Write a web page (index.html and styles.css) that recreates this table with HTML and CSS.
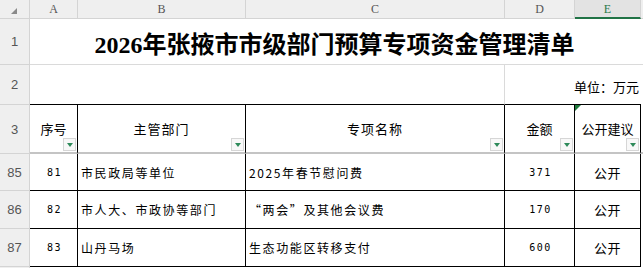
FILE: index.html
```html
<!DOCTYPE html>
<html lang="zh-CN">
<head>
<meta charset="utf-8">
<title>2026年张掖市市级部门预算专项资金管理清单</title>
<link rel="stylesheet" href="styles.css">
</head>
<body>
<div class="sheet">
  <!-- column headers -->
  <div class="corner"><span class="corner-tri"></span></div>
  <div class="colhead">A</div>
  <div class="colhead">B</div>
  <div class="colhead">C</div>
  <div class="colhead">D</div>
  <div class="colhead sel">E</div>
  <div class="colhead last"></div>

  <!-- row 1 -->
  <div class="rowhead">1</div>
  <div class="title">2026年张掖市市级部门预算专项资金管理清单</div>

  <!-- row 2 -->
  <div class="rowhead">2</div>
  <div class="r2 r2a"></div>
  <div class="r2 r2b">单位：万元</div>
  <div class="r2 fcol"></div>

  <!-- row 3 -->
  <div class="rowhead">3</div>
  <div class="hcell">序号<span class="filter"></span></div>
  <div class="hcell sp">主管部门<span class="filter"></span></div>
  <div class="hcell sp">专项名称<span class="filter"></span></div>
  <div class="hcell">金额<span class="filter"></span></div>
  <div class="hcell"><span class="flag"></span>公开建议<span class="filter"></span></div>
  <div class="hfcol"></div>

  <!-- row 85 -->
  <div class="rowhead">85</div>
  <div class="cell num">81</div>
  <div class="cell txt">市民政局等单位</div>
  <div class="cell txt">2025年春节慰问费</div>
  <div class="cell num">371</div>
  <div class="cell ctr">公开</div>
  <div class="dfcol"></div>

  <!-- row 86 -->
  <div class="rowhead">86</div>
  <div class="cell num">82</div>
  <div class="cell txt">市人大、市政协等部门</div>
  <div class="cell txt">“两会”及其他会议费</div>
  <div class="cell num">170</div>
  <div class="cell ctr">公开</div>
  <div class="dfcol"></div>

  <!-- row 87 -->
  <div class="rowhead">87</div>
  <div class="cell num">83</div>
  <div class="cell txt">山丹马场</div>
  <div class="cell txt">生态功能区转移支付</div>
  <div class="cell num">600</div>
  <div class="cell ctr">公开</div>
  <div class="dfcol"></div>

  <div class="rowhead tail"></div>
  <div class="tailrow"></div>
</div>
</body>
</html>
```

FILE: styles.css
```css
* { box-sizing: border-box; }
html, body { margin: 0; padding: 0; background: #ffffff; overflow: hidden; }
body { width: 643px; height: 268px; }

.sheet {
  display: grid;
  grid-template-columns: 30px 48px 168px 259px 70px 66px 2px;
  grid-template-rows: 19px 46px 40px 49px 37px 38px 38px 1px;
  font-family: "Noto Sans CJK SC", "Noto Sans", sans-serif;
  color: #000;
}

.corner {
  background: #efefef;
  border-right: 1px solid #d4d4d4;
  border-bottom: 1px solid #d4d4d4;
  position: relative;
}
.corner-tri {
  position: absolute;
  left: 11px;
  top: 8px;
  width: 0; height: 0;
  border-left: 6px solid transparent;
  border-bottom: 6px solid #8a8a8a;
}

.colhead {
  background: #efefef;
  border-right: 1px solid #d4d4d4;
  border-bottom: 1px solid #d4d4d4;
  font-family: "Liberation Serif", serif;
  font-size: 12px;
  color: #555;
  display: flex;
  align-items: center;
  justify-content: center;
  padding-top: 1px;
}
.colhead.sel {
  background: #e3e3e3;
  color: #2b7a4b;
  border-bottom: 2px solid #217346;
}
.colhead.last { border-right: none; }

.rowhead {
  background: #efefef;
  border-right: 1px solid #d4d4d4;
  border-bottom: 1px solid #d4d4d4;
  font-family: "Liberation Sans", sans-serif;
  font-size: 13px;
  color: #555;
  display: flex;
  align-items: center;
  justify-content: center;
}
.rowhead.tail { border-bottom: none; }

.title {
  grid-column: 2 / 8;
  border-bottom: 1px solid #dadada;
  display: flex;
  align-items: center;
  justify-content: center;
  font-family: "Liberation Serif", "Noto Sans CJK SC", serif;
  font-weight: 700;
  font-size: 24px;
  padding-top: 1px;
  padding-right: 4px;
}

.r2 { border-bottom: 1px solid #000; }
.r2a { grid-column: 2 / 5; border-right: 1px solid #dadada; }
.r2b {
  grid-column: 5 / 7;
  display: flex;
  align-items: flex-end;
  justify-content: flex-end;
  font-size: 13px;
  padding: 0 2px 8px 0;
  white-space: nowrap;
}
.r2.fcol { border-bottom: none; }

.hcell {
  position: relative;
  border-right: 1px solid #000;
  border-bottom: 2px solid #c4c4c4;
  display: flex;
  align-items: center;
  justify-content: center;
  font-size: 13px;
  padding-bottom: 1px;
}
.hcell.sp { letter-spacing: 1px; }
.hfcol { border-bottom: 2px solid #c4c4c4; }

.filter {
  position: absolute;
  right: 1px;
  bottom: 1px;
  width: 13px;
  height: 13px;
  border: 1px solid #d6d6d6;
  background: #f8f8f8;
}
.filter::after {
  content: "";
  position: absolute;
  left: 3px;
  top: 4px;
  width: 0; height: 0;
  border-left: 3px solid transparent;
  border-right: 3px solid transparent;
  border-top: 4px solid #2e8a5a;
}

.flag {
  position: absolute;
  left: 0;
  top: 0;
  width: 0; height: 0;
  border-top: 6px solid #1e7a3c;
  border-right: 6px solid transparent;
}

.cell {
  border-right: 1px solid #000;
  border-bottom: 1px solid #000;
  display: flex;
  align-items: center;
  font-size: 12px;
  white-space: nowrap;
}
.cell.txt { padding-left: 3px; letter-spacing: 1.6px; }
.cell.num { justify-content: center; letter-spacing: 1.5px; padding-left: 2px; font-family: "DejaVu Sans Mono", monospace; font-size: 10px; }
.cell.ctr { justify-content: center; font-size: 13px; letter-spacing: 0.5px; }
.dfcol { }
.tailrow { grid-column: 2 / 8; }
```
